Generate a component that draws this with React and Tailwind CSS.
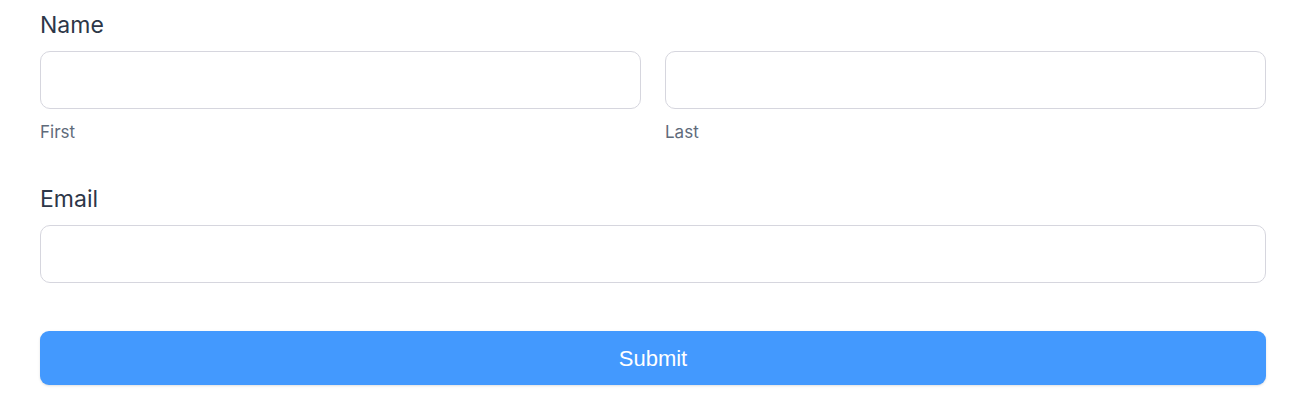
export default function App() {
  return (
    <div className="bg-white w-[1300px] h-[400px] pl-[40px] pr-[34px] pt-[10px]" style={{ fontFamily: "Inter, 'Noto Sans', sans-serif" }}>
      {/* Name */}
      <div className="flex flex-col">
        <label className="text-[23px] leading-[30px] text-[#2d3748]">Name</label>
        <div className="flex gap-[24px] mt-[11px]">
          <div className="flex-1 flex flex-col">
            <input className="h-[58px] w-full rounded-[10px] border border-[#d6d6de] outline-none px-4" />
            <span className="mt-[13px] text-[17px] leading-[20px] text-[#5f6b7b]">First</span>
          </div>
          <div className="flex-1 flex flex-col">
            <input className="h-[58px] w-full rounded-[10px] border border-[#d6d6de] outline-none px-4" />
            <span className="mt-[13px] text-[17px] leading-[20px] text-[#5f6b7b]">Last</span>
          </div>
        </div>
      </div>

      {/* Email */}
      <div className="flex flex-col mt-[42px]">
        <label className="text-[23px] leading-[30px] text-[#2d3748]">Email</label>
        <input className="mt-[11px] h-[58px] w-full rounded-[10px] border border-[#d6d6de] outline-none px-4" />
      </div>

      <button
        className="mt-[48px] h-[54px] w-full rounded-[9px] bg-[#4399fe] text-white text-[22px] shadow-sm"
        style={{ fontFamily: "'Liberation Sans', Arial, sans-serif" }}
      >
        Submit
      </button>
    </div>
  );
}
